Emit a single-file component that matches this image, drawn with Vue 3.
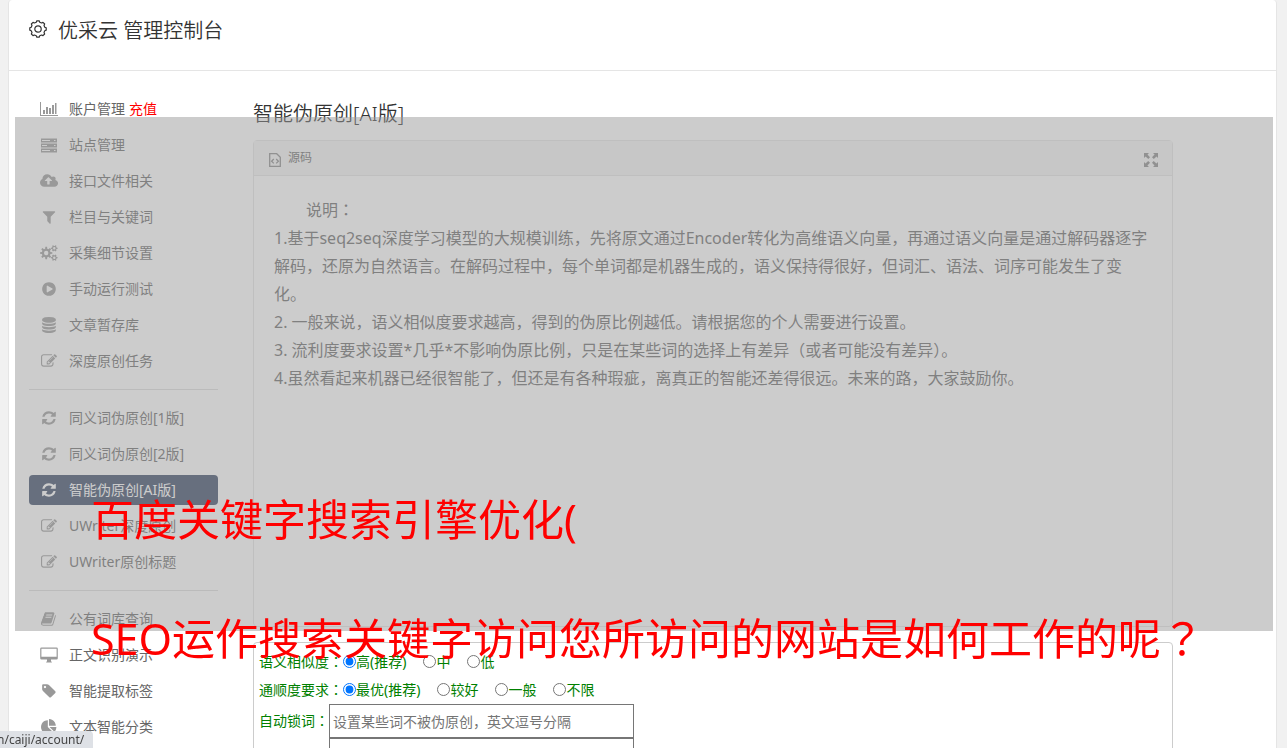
<template>
  <div class="page">
    <header class="topbar">
      <svg class="topbar-icon" viewBox="0 0 18 18" fill="none" stroke="currentColor" stroke-width="1.2">
        <path :d="gearPath(9, 9, 8.3, 7, 8)" stroke-linejoin="round" />
        <circle cx="9" cy="9" r="3.2" />
      </svg>
      <h1>优采云 管理控制台</h1>
    </header>

    <div class="body">
      <nav class="sidebar">
        <template v-for="(group, i) in menu" :key="i">
          <hr v-if="i > 0" />
          <ul>
            <li v-for="item in group" :key="item.text">
              <a href="#" :class="{ active: item.active }">
                <svg class="nav-icon" viewBox="0 0 18 16">
                  <path :d="icons[item.icon].d" :transform="icons[item.icon].t" fill="currentColor" fill-rule="evenodd" />
                </svg>
                <span>{{ item.text }}</span>
                <span v-if="item.extra" class="recharge">{{ item.extra }}</span>
              </a>
            </li>
          </ul>
        </template>
      </nav>

      <main class="main">
        <h2>智能伪原创[AI版]</h2>

        <section class="editor">
          <div class="editor-bar">
            <button type="button" class="source">
              <svg width="12" height="14" viewBox="0 0 12 14" fill="none" stroke="currentColor">
                <path d="M.7.7h7l3.600 3.600v9H.7z" stroke-width="1.300" />
                <path d="M4.800 6L2.600 8.200l2.200 2.200M7.200 6l2.200 2.200-2.200 2.200" stroke-width="1.300" />
              </svg>
              源码
            </button>
            <button type="button" class="fullscreen" aria-label="全屏">
              <svg width="14" height="14" viewBox="0 0 14 14" fill="currentColor">
                <path
                  v-for="r in [0, 90, 180, 270]"
                  :key="r"
                  :transform="`rotate(${r} 7 7)`"
                  d="M0 0h5L3.500 1.500 6 4.200 4.300 6 1.600 3.400 0 5z"
                />
              </svg>
            </button>
          </div>
          <div class="editor-content">
            <p class="indent">说明<span class="punct">：</span></p>
            <p v-for="line in notes" :key="line">{{ line }}</p>
          </div>
        </section>

        <form class="options" @submit.prevent>
          <div v-for="row in radios" :key="row.name" class="row">
            <span>{{ row.label }}<span class="punct">：</span></span>
            <label v-for="opt in row.options" :key="opt">
              <input v-model="form[row.name]" type="radio" :name="row.name" :value="opt" />{{ opt }}
            </label>
          </div>
          <div class="row field">
            <label for="lock">自动锁词<span class="punct">：</span></label>
            <div class="inputs">
              <input id="lock" v-model="form.lock" type="text" placeholder="设置某些词不被伪原创，英文逗号分隔" />
              <input v-model="form.extra" type="text" aria-label="词语" />
            </div>
          </div>
        </form>
      </main>
    </div>

    <div class="mask">
      <p>百度关键字搜索引擎优化(</p>
      <p>SEO运作搜索关键字访问您所访问的网站是如何工作的呢<span class="punct">？</span></p>
    </div>
    <div class="status">n/caiji/account/</div>
  </div>
</template>

<script setup>
import { reactive } from 'vue'

// 齿轮外轮廓
function gearPath(cx, cy, outer, inner, teeth) {
  const pts = []
  const step = (Math.PI * 2) / teeth
  for (let i = 0; i < teeth; i++) {
    const a = i * step
    for (const [r, k] of [[inner, -0.32], [outer, -0.18], [outer, 0.18], [inner, 0.32]]) {
      pts.push(`${(cx + r * Math.cos(a + k * step)).toFixed(2)} ${(cy + r * Math.sin(a + k * step)).toFixed(2)}`)
    }
  }
  return `M${pts.join('L')}z`
}

function gear(cx, cy, outer, inner, hole, teeth) {
  return gearPath(cx, cy, outer, inner, teeth) +
    `M${cx - hole} ${cy}a${hole} ${hole} 0 1 0 ${hole * 2} 0a${hole} ${hole} 0 1 0 ${-hole * 2} 0z`
}

// 1792 网格缩放到 16px
const fa = 'translate(1 0) scale(0.0089)'

const icons = {
  chart: { d: 'M0 1h1v13h17v1H0zM3 9h2v4H3zM6 6h2v7H6zM9 7h2v6H9zM12 4h2v9h-2zM15 2h1.500v11H15z' },
  server: {
    d: 'M1 1.500h16v4H1zM1 6.500h16v4H1zM1 11.500h16v4H1zM2 3h8v1H2zM2 8h5v1H2zM2 13h8v1H2zM14 3h1.500v1H14zM14 8h1.500v1H14zM14 13h1.500v1H14z'
  },
  upload: {
    t: 'translate(0 0) scale(0.0094 0.0089)',
    d: 'M1280 864q0-14-9-23l-352-352q-9-9-23-9t-23 9l-351 351q-10 12-10 24 0 14 9 23t23 9h224v352q0 13 9.500 22.500t22.500 9.500h192q13 0 22.500-9.500t9.500-22.500v-352h224q13 0 22.500-9.500t9.500-22.500zm640 288q0 159-112.500 271.500t-271.500 112.500h-1088q-185 0-316.500-131.500t-131.500-316.500q0-130 70-240t188-165q-2-30-2-43 0-212 150-362t362-150q156 0 285.500 87t188.500 231q71-62 166-62 106 0 181 75t75 181q0 76-41 138 130 31 213.500 135.500t83.500 238.500z'
  },
  filter: {
    t: fa,
    d: 'M1595 295q17 41-14 70l-493 493v742q0 42-39 59-13 5-25 5-27 0-45-19l-256-256q-19-19-19-45v-486l-493-493q-31-29-14-70 17-39 59-39h1280q42 0 59 39z'
  },
  cogs: { d: gear(6.2, 8, 6.2, 4.4, 2.2, 8) + gear(14.3, 3.3, 3.3, 2.4, 1.2, 6) + gear(14.3, 12.7, 3.3, 2.4, 1.2, 6) },
  play: {
    t: fa,
    d: 'M896 128q209 0 385.500 103t279.500 279.500 103 385.500-103 385.500-279.500 279.500-385.500 103-385.500-103-279.500-279.500-103-385.500 103-385.500 279.500-279.500 385.500-103zm384 823q32-18 32-55t-32-55l-544-320q-31-19-64-1-32 19-32 56v640q0 37 32 56 16 8 32 8 17 0 32-9z'
  },
  database: {
    t: fa,
    d: 'M896 768q237 0 443-43t325-127v170q0 69-103 128t-280 93.500-385 34.500-385-34.500-280-93.500-103-128v-170q119 84 325 127t443 43zm0 768q237 0 443-43t325-127v170q0 69-103 128t-280 93.500-385 34.500-385-34.500-280-93.500-103-128v-170q119 84 325 127t443 43zm0-384q237 0 443-43t325-127v170q0 69-103 128t-280 93.500-385 34.500-385-34.500-280-93.500-103-128v-170q119 84 325 127t443 43zm0-1152q208 0 385 34.500t280 93.500 103 128v128q0 69-103 128t-280 93.500-385 34.500-385-34.500-280-93.500-103-128v-128q0-69 103-128t280-93.500 385-34.500z'
  },
  edit: {
    t: fa,
    d: 'M888 1184l116-116-152-152-116 116v56h96v96h56zm440-720q-16-16-33 1l-350 350q-17 17-1 33t33-1l350-350q17-17 1-33zm80 594v190q0 119-84.500 203.500t-203.500 84.500h-832q-119 0-203.500-84.500t-84.500-203.500v-832q0-119 84.500-203.500t203.500-84.500h832q63 0 117 25 15 7 18 23 3 17-9 29l-49 49q-14 14-32 8-23-6-45-6h-832q-66 0-113 47t-47 113v832q0 66 47 113t113 47h832q66 0 113-47t47-113v-126q0-13 9-22l64-64q15-15 35-7t20 29zm-96-738l288 288-672 672h-288v-288zm444 132l-92 92-288-288 92-92q28-28 68-28t68 28l152 152q28 28 28 68t-28 68z'
  },
  refresh: {
    t: fa,
    d: 'M1639 1056q0 5-1 7-64 268-268 434.500t-478 166.500q-146 0-282.500-55t-243.500-157l-129 129q-19 19-45 19t-45-19-19-45v-448q0-26 19-45t45-19h448q26 0 45 19t19 45-19 45l-137 137q71 66 161 102t187 36q134 0 250-65t186-179q11-17 53-117 8-23 30-23h192q13 0 22.500 9.500t9.500 22.500zm25-800v448q0 26-19 45t-45 19h-448q-26 0-45-19t-19-45 19-45l138-138q-148-137-349-137-134 0-250 65t-186 179q-11 17-53 117-8 23-30 23h-199q-13 0-22.500-9.500t-9.500-22.500v-7q65-268 270-434.500t480-166.500q146 0 284 55.500t245 156.500l130-129q19-19 45-19t45 19 19 45z'
  },
  book: {
    t: fa,
    d: 'M1639 478q40 57 18 129l-275 906q-19 64-76.500 107.500t-122.500 43.500h-923q-77 0-148.500-53.500t-99.500-131.500q-24-67-2-127 0-4 3-27t4-37q1-8-3-21.500t-3-19.500q2-11 8-21t16.500-23.500 16.500-23.500q23-38 45-91.500t30-91.500q3-10 .5-30t-.5-28q3-11 17-28t17-23q21-36 42-92t25-90q1-9-2.500-32t.5-28q4-13 22-30.500t22-22.500q19-26 42.500-84.500t27.500-96.500q1-8-3-25.500t-2-26.500q2-8 9-18t18-23 17-21q8-12 16.500-30.500t15-35 16-36 19.500-32 26.500-23.500 36-11.500 47.500 5.500l-1 3q38-9 51-9h761q74 0 114 56t18 130l-274 906q-36 119-71.500 153.500t-128.500 34.500h-869q-27 0-38 15-11 16-1 43 24 70 144 70h923q29 0 56-15.500t35-41.500l300-987q7-22 5-57 38 15 59 43zm-1064 2q-4 13 2 22.500t20 9.500h608q13 0 25.500-9.500t16.500-22.500l21-64q4-13-2-22.500t-20-9.500h-608q-13 0-25.500 9.500t-16.500 22.500zm-83 256q-4 13 2 22.500t20 9.500h608q13 0 25.500-9.500t16.500-22.500l21-64q4-13-2-22.500t-20-9.500h-608q-13 0-25.500 9.500t-16.500 22.500z'
  },
  desktop: { d: 'M1.500 .5h15q1.300 0 1.300 1.300v9.400q0 1.300-1.300 1.300H11v1.500l1 1.500H6l1-1.500v-1.500H1.500Q.2 12.500.2 11.200V1.800Q.2.5 1.500.5zM1.400 1.700v8h15.200v-8z' },
  tag: {
    t: fa,
    d: 'M576 448q0-53-37.500-90.500t-90.500-37.500-90.500 37.500-37.500 90.500 37.500 90.500 90.500 37.500 90.500-37.500 37.500-90.500zm1067 576q0 53-37 90l-491 492q-39 37-91 37-53 0-90-37l-715-716q-38-37-64.500-101t-26.500-117v-416q0-52 38-90t90-38h416q53 0 117 26.500t102 64.500l715 714q37 39 37 91z'
  },
  pie: {
    t: fa,
    d: 'M768 890l546 546q-106 108-247.500 168t-298.500 60q-209 0-385.500-103t-279.500-279.500-103-385.500 103-385.500 279.500-279.500 385.500-103v762zm187 6h773q0 157-60 298.500t-168 247.500zm709-128h-768v-768q209 0 385.500 103t279.500 279.500 103 385.500z'
  }
}

const menu = [
  [
    { icon: 'chart', text: '账户管理', extra: '充值' },
    { icon: 'server', text: '站点管理' },
    { icon: 'upload', text: '接口文件相关' },
    { icon: 'filter', text: '栏目与关键词' },
    { icon: 'cogs', text: '采集细节设置' },
    { icon: 'play', text: '手动运行测试' },
    { icon: 'database', text: '文章暂存库' },
    { icon: 'edit', text: '深度原创任务' }
  ],
  [
    { icon: 'refresh', text: '同义词伪原创[1版]' },
    { icon: 'refresh', text: '同义词伪原创[2版]' },
    { icon: 'refresh', text: '智能伪原创[AI版]', active: true },
    { icon: 'edit', text: 'UWriter深度原创' },
    { icon: 'edit', text: 'UWriter原创标题' }
  ],
  [
    { icon: 'book', text: '公有词库查询' },
    { icon: 'desktop', text: '正文识别演示' },
    { icon: 'tag', text: '智能提取标签' },
    { icon: 'pie', text: '文本智能分类' }
  ]
]

const notes = [
  '1.基于seq2seq深度学习模型的大规模训练，先将原文通过Encoder转化为高维语义向量，再通过语义向量是通过解码器逐字解码，还原为自然语言。在解码过程中，每个单词都是机器生成的，语义保持得很好，但词汇、语法、词序可能发生了变化。',
  '2. 一般来说，语义相似度要求越高，得到的伪原比例越低。请根据您的个人需要进行设置。',
  '3. 流利度要求设置*几乎*不影响伪原比例，只是在某些词的选择上有差异（或者可能没有差异）。',
  '4.虽然看起来机器已经很智能了，但还是有各种瑕疵，离真正的智能还差得很远。未来的路，大家鼓励你。'
]

const radios = [
  { name: 'similar', label: '语义相似度', options: ['高(推荐)', '中', '低'] },
  { name: 'fluent', label: '通顺度要求', options: ['最优(推荐)', '较好', '一般', '不限'] }
]

const form = reactive({
  similar: '高(推荐)',
  fluent: '最优(推荐)',
  lock: '',
  extra: ''
})
</script>

<style>
html,
body {
  height: 100%;
  overflow: hidden;
  background: #f1f1f1;
}
</style>

<style scoped>
.page {
  box-sizing: border-box;
  min-height: 100vh;
  margin: 0 10px 0 8px;
  background: #fff;
  border: 1px solid #e5e5e5;
  border-top: 0;
  border-radius: 4px 4px 0 0;
  font-family: "Noto Sans", "Noto Sans CJK SC", sans-serif;
  font-size: 14px;
  color: #666;
}

h1,
h2,
p,
ul {
  margin: 0;
  padding: 0;
}

/* 全角标点居中 */
.punct {
  font-family: "Noto Sans CJK JP", sans-serif;
  line-height: 1;
}

.topbar {
  display: flex;
  gap: 11px;
  height: 59px;
  padding: 11px 20px 0;
  border-bottom: 1px solid #e5e5e5;
  color: #333;
}

.topbar-icon {
  width: 18px;
  height: 18px;
  margin-top: 9px;
}

h1,
h2 {
  font-size: 20px;
  font-weight: 350;
  line-height: 40px;
  color: #333;
}

.body {
  display: flex;
  gap: 35px;
  padding: 23px 103px 0 20px;
}

.sidebar {
  flex: none;
  width: 189px;
}

.sidebar ul {
  display: flex;
  flex-direction: column;
  gap: 6px;
  list-style: none;
}

.sidebar hr {
  height: 1px;
  margin: 13px 0;
  border: 0;
  background: #ddd;
}

.sidebar a {
  display: flex;
  align-items: center;
  height: 30px;
  border-radius: 4px;
  color: #666;
  line-height: 30px;
  text-decoration: none;
}

.nav-icon {
  width: 18px;
  height: 16px;
  margin: 0 11px;
  color: #999;
}

.sidebar a.active,
.active .nav-icon {
  color: #fff;
}

.sidebar a.active {
  background: #354563;
}

.sidebar .recharge {
  margin-left: 4px;
  color: #f00;
}

.main {
  flex: 1;
  min-width: 0;
}

.editor {
  margin-top: 6px;
  border: 1px solid #e5e5e5;
  border-radius: 4px;
}

.editor-bar {
  display: flex;
  justify-content: space-between;
  align-items: center;
  height: 34px;
  padding: 0 14px 0 15px;
  background: #f5f5f5;
  border-bottom: 1px solid #e5e5e5;
}

.editor-bar button {
  display: flex;
  align-items: center;
  gap: 7px;
  padding: 0;
  border: 0;
  background: none;
  color: #666;
  font: 12px/20px "Noto Sans", "Noto Sans CJK SC", sans-serif;
}

.editor-bar svg {
  margin-top: 3px;
  color: #888;
}

.editor-content {
  box-sizing: border-box;
  min-height: 450px;
  padding: 20px;
  font-size: 16px;
  line-height: 28px;
}

.indent {
  text-indent: 2em;
}

.options {
  margin-top: 15px;
  padding: 4px 5px;
  border: 1px solid #ccc;
  border-radius: 4px;
  color: #008000;
}

.row {
  display: flex;
  align-items: center;
  height: 28px;
}

.row label {
  display: flex;
  align-items: center;
}

.row label + label {
  margin-left: 17px;
}

.row input[type="radio"] {
  width: 13px;
  height: 13px;
  margin: 0;
}

.row.field {
  align-items: flex-start;
  height: auto;
  margin-top: 1px;
}

.field label {
  height: 32px;
}

.inputs {
  display: flex;
  flex-direction: column;
}

.inputs input {
  box-sizing: border-box;
  width: 305px;
  height: 34px;
  padding: 0 3px;
  border: 1px solid #767676;
  border-radius: 0;
  font: 14px/20px "Noto Sans", "Noto Sans CJK SC", sans-serif;
}

.mask {
  position: fixed;
  top: 117px;
  left: 15px;
  right: 14px;
  box-sizing: border-box;
  height: 514px;
  padding: 343px 0 0 76px;
  background: rgba(153, 153, 153, 0.5);
  color: #f00;
  font-size: 43px;
  line-height: 119px;
  white-space: nowrap;
}

.status {
  position: fixed;
  left: 0;
  bottom: 0;
  padding: 0 9px 0 0;
  border-top-right-radius: 4px;
  background: #dee1e6;
  color: #444;
  font-size: 12px;
  line-height: 17px;
  text-indent: -3px;
  overflow: hidden;
}
</style>
